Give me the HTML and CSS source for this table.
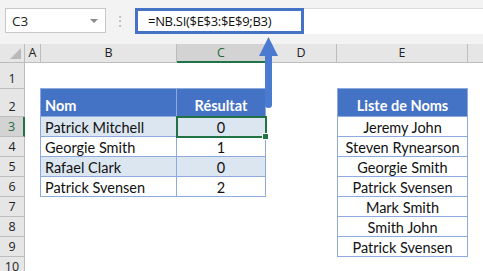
FILE: index.html
```html
<!DOCTYPE html>
<html lang="fr">
<head>
	<meta charset="utf-8">
	<title>NB.SI</title>
	<link rel="stylesheet" href="styles.css">
</head>
<body>
	<div class="app">
		<div class="topbar">
			<div class="namebox">
				<span>C3</span>
				<span class="drop"></span>
			</div>
			<div class="grip">&#8942;</div>
			<div class="fbar">
				<div class="formula">=NB.SI($E$3:$E$9;B3)</div>
			</div>
		</div>

		<div class="sheet">
			<div class="corner"><span class="tri"></span></div>
			<div class="colhead">A</div>
			<div class="colhead">B</div>
			<div class="colhead sel">C</div>
			<div class="colhead">D</div>
			<div class="colhead">E</div>
			<div class="colhead last"></div>

			<div class="rowhead r1">1</div>
			<div class="rowhead r2">2</div>
			<div class="rowhead r3 sel">3</div>
			<div class="rowhead r4">4</div>
			<div class="rowhead r5">5</div>
			<div class="rowhead r6">6</div>
			<div class="rowhead r7">7</div>
			<div class="rowhead r8">8</div>
			<div class="rowhead r9">9</div>
			<div class="rowhead r10">10</div>

			<table class="tbl results">
				<tr class="head"><th class="left">Nom</th><th>Résultat</th></tr>
				<tr class="band"><td class="left">Patrick Mitchell</td><td class="active">0</td></tr>
				<tr><td class="left">Georgie Smith</td><td>1</td></tr>
				<tr class="band"><td class="left">Rafael Clark</td><td>0</td></tr>
				<tr><td class="left">Patrick Svensen</td><td>2</td></tr>
			</table>

			<table class="tbl names">
				<tr class="head"><th>Liste de Noms</th></tr>
				<tr><td>Jeremy John</td></tr>
				<tr><td>Steven Rynearson</td></tr>
				<tr><td>Georgie Smith</td></tr>
				<tr><td>Patrick Svensen</td></tr>
				<tr><td>Mark Smith</td></tr>
				<tr><td>Smith John</td></tr>
				<tr><td>Patrick Svensen</td></tr>
			</table>
		</div>

		<!-- callout pointing from C3 up to the formula -->
		<svg class="arrow" width="24" height="74" viewBox="0 0 24 74">
			<path d="M7 18 H14 V68 Q14 71 10.5 71 Q7 71 7 68 Z" fill="#4a7bd0"/>
			<path d="M10.5 0 L20 19 L1 19 Z" fill="#4a7bd0"/>
		</svg>
	</div>
</body>
</html>
```

FILE: styles.css
```css
html, body {
	margin: 0;
	padding: 0;
}

body {
	background: #fff;
	font-family: "Open Sans", "Liberation Sans", sans-serif;
	color: #222;
}

.app {
	position: relative;
	width: 483px;
	height: 271px;
	overflow: hidden;
}

/* name box + formula bar */
.topbar {
	display: flex;
	height: 44px;
	box-sizing: border-box;
	padding: 8px 0 10px 5px;
	background: #f3f3f3;
}

.namebox {
	width: 101px;
	height: 25px;
	box-sizing: border-box;
	border: 1px solid #c8c8c8;
	background: #fff;
	display: flex;
	align-items: center;
	justify-content: space-between;
	padding: 0 7px 0 6px;
	font-size: 13.5px;
	color: #222;
}

.drop {
	width: 0;
	height: 0;
	border-left: 4px solid transparent;
	border-right: 4px solid transparent;
	border-top: 4px solid #8a8a8a;
}

.grip {
	width: 29px;
	text-align: center;
	color: #b5b5b5;
	font-size: 14px;
	line-height: 25px;
	padding-right: 2px;
	box-sizing: border-box;
}

.fbar {
	flex: 1;
	height: 26px;
	background: #fff;
	border-top: 1px solid #dcdcdc;
	box-sizing: border-box;
	position: relative;
}

.formula {
	position: absolute;
	left: 0;
	top: -1px;
	width: 169px;
	height: 26px;
	box-sizing: border-box;
	border: 3px solid #4472c4;
	padding-left: 10px;
	font-size: 13px;
	letter-spacing: -0.3px;
	line-height: 20px;
	color: #111;
}

/* worksheet grid */
.sheet {
	display: grid;
	grid-template-columns: 25px 16px 136px 89px 71px 131px 1fr;
	grid-template-rows: 19px 26px 28px repeat(8, 20px);
}

.corner {
	background: #e6e6e6;
	border-right: 1px solid #bdbdbd;
	border-bottom: 1px solid #bdbdbd;
	position: relative;
}

.tri {
	position: absolute;
	right: 3px;
	bottom: 3px;
	width: 0;
	height: 0;
	border-left: 11px solid transparent;
	border-bottom: 11px solid #b9b9b9;
}

.colhead {
	background: #e6e6e6;
	border-right: 1px solid #bdbdbd;
	border-bottom: 1px solid #bdbdbd;
	font-size: 12.5px;
	line-height: 18px;
	text-align: center;
	color: #222;
}

.colhead.sel {
	background: #d3d3d3;
	color: #1e6b40;
	border-bottom: 2px solid #217346;
}

.colhead.last {
	border-right: none;
}

.rowhead {
	grid-column: 1;
	background: #e6e6e6;
	border-right: 1px solid #bdbdbd;
	border-bottom: 1px solid #bdbdbd;
	font-size: 12.5px;
	text-align: center;
	color: #222;
	display: flex;
	align-items: flex-end;
	justify-content: center;
	padding-bottom: 1px;
	box-sizing: border-box;
}

.rowhead.sel {
	background: #d3d3d3;
	color: #1e6b40;
	border-right: 2px solid #217346;
}

/* the two excel tables */
.tbl {
	border-collapse: collapse;
	font-family: "Lato", "Open Sans", sans-serif;
	font-size: 14.5px;
	color: #111;
	align-self: start;
}

.tbl th,
.tbl td {
	border: 1px solid #8ea9db;
	padding: 0 4px;
	text-align: center;
	vertical-align: bottom;
	line-height: 17px;
	height: 20px;
	box-sizing: border-box;
	white-space: nowrap;
}

.tbl .head th {
	background: #4472c4;
	color: #fff;
	font-weight: bold;
	height: 28px;
	padding-bottom: 2px;
}

.tbl .left {
	text-align: left;
}

.tbl .band td {
	background: #dce6f1;
}

.results {
	grid-column: 3 / 5;
	grid-row: 3 / 8;
	width: 226px;
	margin-left: -1px;
	margin-top: -1px;
}

.results th:first-child,
.results td:first-child {
	width: 136px;
}

.names {
	grid-column: 6 / 7;
	grid-row: 3 / 11;
	width: 131px;
	margin-top: -1px;
}

.active {
	position: relative;
}

.active::after {
	content: "";
	position: absolute;
	left: -1px;
	top: -1px;
	right: -2px;
	bottom: -2px;
	border: 2px solid #217346;
}

.active::before {
	content: "";
	position: absolute;
	right: -4px;
	bottom: -4px;
	width: 5px;
	height: 5px;
	background: #217346;
	border: 1px solid #fff;
	z-index: 1;
}

.arrow {
	position: absolute;
	left: 258px;
	top: 37px;
}
```
